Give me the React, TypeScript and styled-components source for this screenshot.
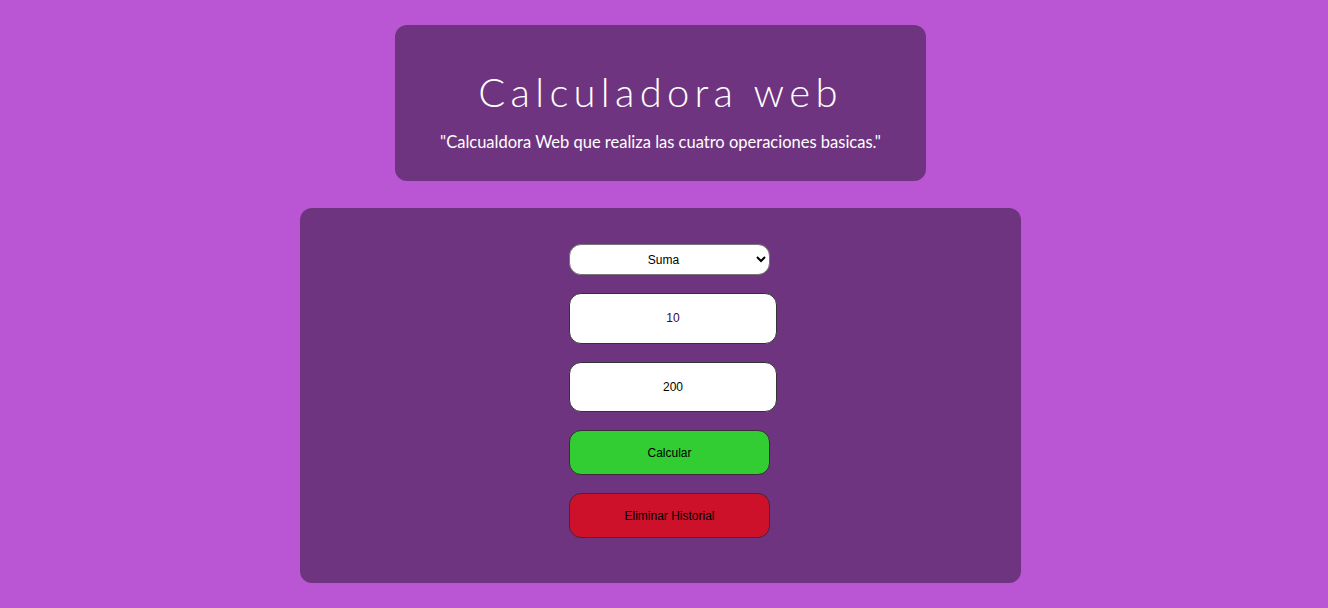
import React from "react";
import styled, { createGlobalStyle } from "styled-components";

const Global = createGlobalStyle`
  html, body { margin: 0; padding: 0; }
  body {
    background: #ba55d3;
    font-family: "Liberation Sans", Arial, sans-serif;
  }
`;

const Page = styled.main`
  display: flex;
  flex-direction: column;
  align-items: center;
  padding-top: 25px;
  padding-right: 7px;
  gap: 27px;
`;

const HeaderCard = styled.header`
  width: 531px;
  height: 156px;
  box-sizing: border-box;
  background: #6f347f;
  border-radius: 12px;
  display: flex;
  flex-direction: column;
  align-items: center;
  padding-top: 43px;
  color: #fff;
  font-family: "Century Gothic", "URW Gothic", Lato, "Open Sans", sans-serif;
`;

const Title = styled.h1`
  margin: 0;
  font-size: 40px;
  font-weight: 300;
  letter-spacing: 5.3px;
  line-height: 48px;
`;

const Subtitle = styled.p`
  margin: 17px 0 0;
  font-size: 16.5px;
  font-weight: 400;
  line-height: 18px;
`;

const MainCard = styled.section`
  width: 721px;
  height: 375px;
  box-sizing: border-box;
  background: #6f347f;
  border-radius: 12px;
  display: flex;
  flex-direction: column;
  align-items: center;
  padding-top: 36px;
`;

const Column = styled.div`
  width: 208px;
  display: flex;
  flex-direction: column;
  align-items: flex-start;
  gap: 18px;
  margin-left: 25px;
`;

const Select = styled.select`
  width: 201px;
  height: 31px;
  border-radius: 12px;
  border: 1px solid #767676;
  background: #fff;
  font-family: "Liberation Sans", Arial, sans-serif;
  font-size: 12px;
  text-align: center;
  text-align-last: center;
  color: #000;
  padding: 0 4px;
`;

const NumInput = styled.input<{ $accent?: boolean }>`
  width: 208px;
  height: 50.5px;
  box-sizing: border-box;
  border-radius: 12px;
  border: 1px solid #333;
  background: #fff;
  text-align: center;
  font-family: "Liberation Sans", Arial, sans-serif;
  font-size: 12px;
  color: ${(p) => (p.$accent ? "#3c0838" : "#000")};
  outline: none;
`;

const Action = styled.button<{ $bg: string }>`
  width: 201px;
  height: 45px;
  border-radius: 12px;
  border: 1px solid #3a2a3a;
  background: ${(p) => p.$bg};
  color: #000;
  font-family: "Liberation Sans", Arial, sans-serif;
  font-size: 12px;
  cursor: pointer;
`;

export default function App() {
  return (
    <>
      <Global />
      <Page>
        <HeaderCard>
          <Title>Calculadora web</Title>
          <Subtitle>"Calcualdora Web que realiza las cuatro operaciones basicas."</Subtitle>
        </HeaderCard>
        <MainCard>
          <Column>
            <Select defaultValue="suma">
              <option value="suma">Suma</option>
              <option value="resta">Resta</option>
              <option value="multiplicacion">Multiplicación</option>
              <option value="division">División</option>
            </Select>
            <NumInput type="text" defaultValue="10" $accent />
            <NumInput type="text" defaultValue="200" />
            <Action $bg="#32cd32">Calcular</Action>
            <Action $bg="#ce112b">Eliminar Historial</Action>
          </Column>
        </MainCard>
      </Page>
    </>
  );
}
